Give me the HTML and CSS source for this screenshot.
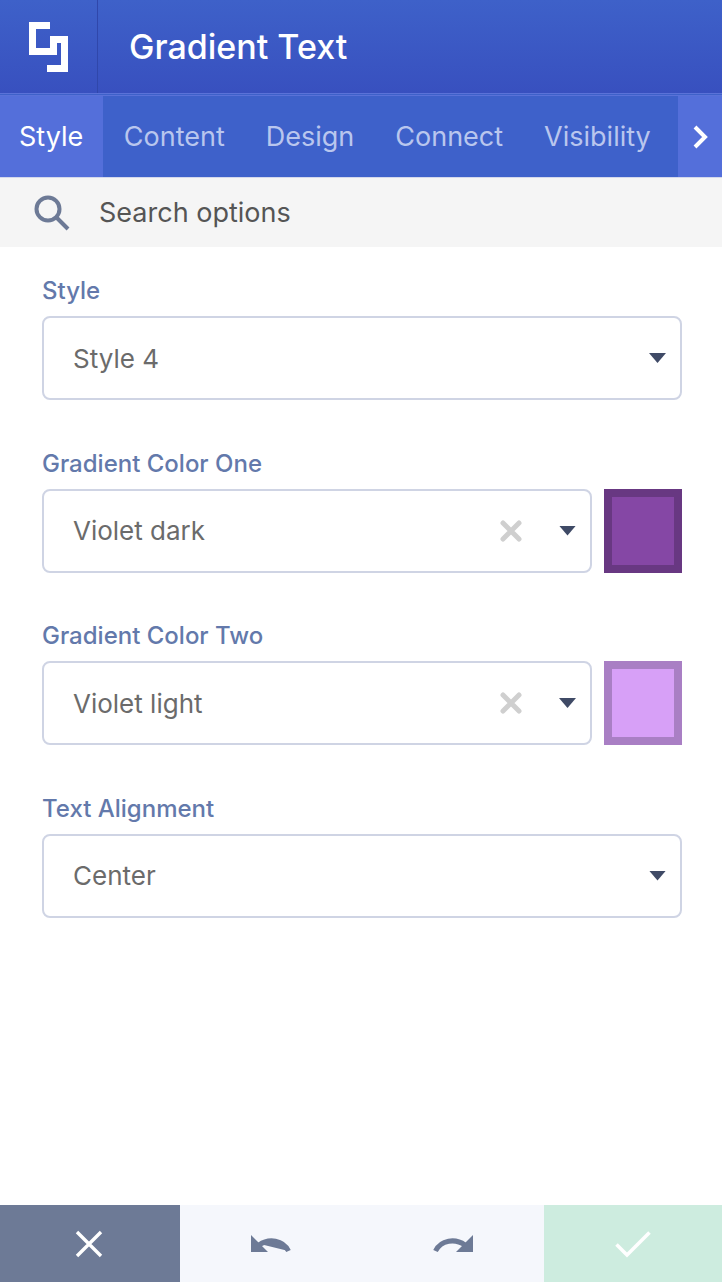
FILE: index.html
```html
<!DOCTYPE html>
<html lang="en">
<head>
    <meta charset="UTF-8">
    <meta name="viewport" content="width=device-width, initial-scale=1.0">
    <title>Gradient Text</title>
    <link rel="stylesheet" href="styles.css">
</head>
<body>
    <div class="panel">
        <header class="top-bar">
            <div class="logo">
                <svg width="39" height="50" viewBox="0 0 39 50">
                    <path d="M0 0H21V7H7V26H21V14H39V50H18V43H32V21H28V33H0Z" fill="#fff"/>
                </svg>
            </div>
            <h1>Gradient Text</h1>
        </header>

        <nav class="tabs">
            <a class="tab active">Style</a>
            <a class="tab">Content</a>
            <a class="tab">Design</a>
            <a class="tab">Connect</a>
            <a class="tab">Visibility</a>
            <span class="tab-next">
                <svg width="16" height="24" viewBox="0 0 16 24">
                    <path d="M3 2L13 12L3 22" fill="none" stroke="#fff" stroke-width="4"/>
                </svg>
            </span>
        </nav>

        <div class="search">
            <svg width="38" height="38" viewBox="0 0 38 38">
                <circle cx="15" cy="15" r="11.5" fill="none" stroke="#6d7a96" stroke-width="4"/>
                <path d="M23.5 23.5L35 35" fill="none" stroke="#6d7a96" stroke-width="4"/>
            </svg>
            <span>Search options</span>
        </div>

        <main class="options">
            <section class="field">
                <h2>Style</h2>
                <div class="row">
                    <div class="select">
                        <span class="value">Style 4</span>
                        <span class="caret"></span>
                    </div>
                </div>
            </section>

            <section class="field">
                <h2>Gradient Color One</h2>
                <div class="row">
                    <div class="select">
                        <span class="value">Violet dark</span>
                        <svg class="clear" width="22" height="22" viewBox="0 0 22 22">
                            <path d="M3 3L19 19M19 3L3 19" stroke="#cfcfcf" stroke-width="5" stroke-linecap="round"/>
                        </svg>
                        <span class="caret"></span>
                    </div>
                    <div class="swatch swatch-dark"></div>
                </div>
            </section>

            <section class="field">
                <h2>Gradient Color Two</h2>
                <div class="row">
                    <div class="select">
                        <span class="value">Violet light</span>
                        <svg class="clear" width="22" height="22" viewBox="0 0 22 22">
                            <path d="M3 3L19 19M19 3L3 19" stroke="#cfcfcf" stroke-width="5" stroke-linecap="round"/>
                        </svg>
                        <span class="caret"></span>
                    </div>
                    <div class="swatch swatch-light"></div>
                </div>
            </section>

            <section class="field">
                <h2>Text Alignment</h2>
                <div class="row">
                    <div class="select">
                        <span class="value">Center</span>
                        <span class="caret"></span>
                    </div>
                </div>
            </section>
        </main>

        <footer class="actions">
            <button class="action cancel">
                <svg width="30" height="30" viewBox="0 0 30 30">
                    <path d="M3 3L27 27M27 3L3 27" stroke="#fff" stroke-width="3.4"/>
                </svg>
            </button>
            <button class="action history undo">
                <svg width="40" height="18" viewBox="0 0 40 18">
                    <path d="M0 0L17 17H0Z M37.5 16C33 7 20 3 9 9" fill="#6d7a96"/>
                    <path d="M37.5 16C32 5 18 3 8 10" fill="none" stroke="#6d7a96" stroke-width="5"/>
                </svg>
            </button>
            <button class="action history redo">
                <svg width="40" height="18" viewBox="0 0 40 18">
                    <path d="M40 0L23 17H40Z" fill="#6d7a96"/>
                    <path d="M2.5 16C8 5 22 3 32 10" fill="none" stroke="#6d7a96" stroke-width="5"/>
                </svg>
            </button>
            <button class="action save">
                <svg width="36" height="28" viewBox="0 0 36 28">
                    <path d="M1.5 14.5L12 25L34.5 2.5" fill="none" stroke="#fff" stroke-width="3.6"/>
                </svg>
            </button>
        </footer>
    </div>
</body>
</html>
```

FILE: styles.css
```css
* {
    margin: 0;
    padding: 0;
    box-sizing: border-box;
}

body {
    font-family: Inter, "Liberation Sans", sans-serif;
    background-color: #fff;
    color: #6b6b6b;
}

.panel {
    display: flex;
    flex-direction: column;
    height: 1282px;
    overflow: hidden;
}

.top-bar {
    display: flex;
    align-items: center;
    height: 96px;
    background: linear-gradient(to bottom, #3e61c9, #3850bf);
    border-bottom: 3px double #5a72d8;
    color: #fff;
}

.logo {
    display: flex;
    align-items: center;
    justify-content: center;
    width: 98px;
    height: 93px;
    padding-right: 1px;
    border-right: 1px solid #3047ab;
}

.top-bar h1 {
    margin-left: 31px;
    font-size: 34px;
    font-weight: 500;
}

.tabs {
    display: flex;
    height: 82px;
    background-color: #3e61ca;
    border-bottom: 1px solid #d3d8ec;
}

.tab {
    display: flex;
    align-items: center;
    padding: 0 20.5px;
    font-size: 27px;
    color: #b9c6ee;
    white-space: nowrap;
}

.tab.active {
    padding: 0 20px 0 19px;
    background-color: #546fda;
    color: #fff;
}

.tab-next {
    display: flex;
    align-items: center;
    justify-content: center;
    width: 44px;
    margin-left: auto;
    background-color: #546fda;
}

.search {
    display: flex;
    align-items: center;
    gap: 28px;
    height: 69px;
    padding-left: 33px;
    background-color: #f5f5f5;
    font-size: 27px;
    color: #555;
}

.options {
    flex: 1;
    padding: 28px 40px 0 42px;
}

.field {
    margin-bottom: 47.5px;
}

.field h2 {
    margin-bottom: 10px;
    font-size: 24px;
    line-height: 31px;
    font-weight: 500;
    color: #6379ab;
}

.row {
    display: flex;
    gap: 12px;
}

.select {
    display: flex;
    flex: 1;
    align-items: center;
    height: 84px;
    padding: 0 14px 0 29px;
    background-color: #fff;
    border: 2px solid #cfd4e4;
    border-radius: 8px;
    font-size: 26px;
}

.value {
    flex: 1;
}

.clear {
    margin-right: 37px;
}

.caret {
    width: 17px;
    height: 10px;
    background-color: #3f4a66;
    clip-path: polygon(0 0, 100% 0, 50% 100%);
}

.swatch {
    width: 78px;
    height: 84px;
    border: 8px solid;
}

.swatch-dark {
    background-color: #8547a5;
    border-color: #683882;
}

.swatch-light {
    background-color: #d7a0f7;
    border-color: #a97fc4;
}

.actions {
    display: flex;
    height: 77px;
    background-color: #f5f7fc;
}

.action {
    display: flex;
    align-items: center;
    justify-content: center;
    border: none;
    background: none;
}

.cancel {
    width: 180px;
    padding-right: 2px;
    background-color: #6d7a96;
}

.history {
    width: 182px;
}

.save {
    width: 178px;
    background-color: #cdecdf;
}
```
